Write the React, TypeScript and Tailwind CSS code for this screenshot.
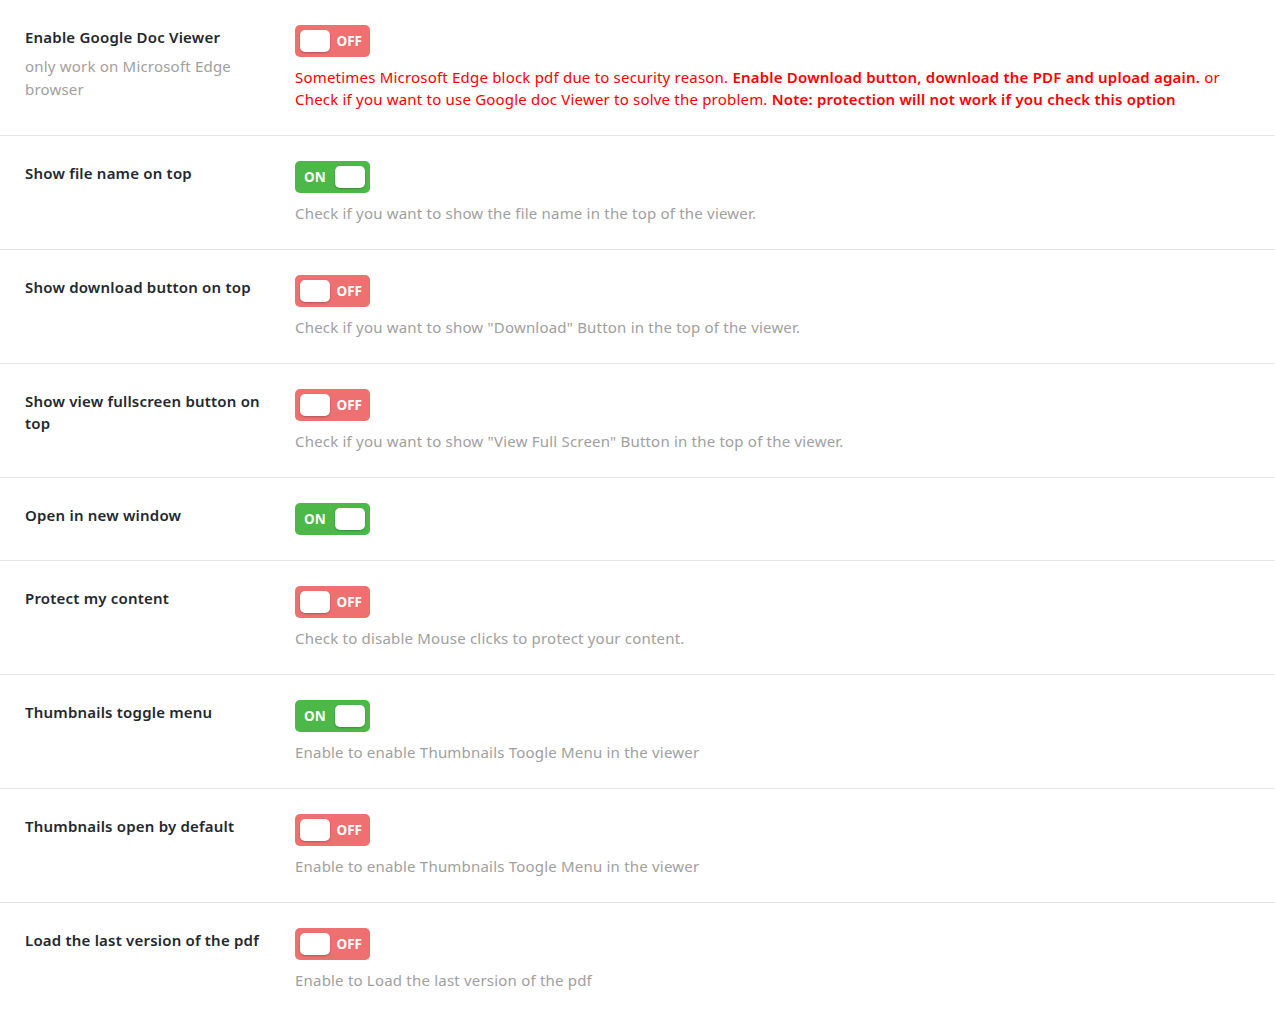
import React from 'react';

type Row = {
  label: string;
  sub?: string;
  on: boolean;
  desc?: React.ReactNode;
};

const rows: Row[] = [
  {
    label: 'Enable Google Doc Viewer',
    sub: 'only work on Microsoft Edge browser',
    on: false,
    desc: (
      <span className="text-[#ff0000]">
        Sometimes Microsoft Edge block pdf due to security reason.{' '}
        <b className="font-semibold">Enable Download button, download the PDF and upload again.</b> or Check if
        you want to use Google doc Viewer to solve the problem.{' '}
        <b className="font-semibold">Note: protection will not work if you check this option</b>
      </span>
    ),
  },
  { label: 'Show file name on top', on: true, desc: 'Check if you want to show the file name in the top of the viewer.' },
  { label: 'Show download button on top', on: false, desc: 'Check if you want to show "Download" Button in the top of the viewer.' },
  { label: 'Show view fullscreen button on top', on: false, desc: 'Check if you want to show "View Full Screen" Button in the top of the viewer.' },
  { label: 'Open in new window', on: true },
  { label: 'Protect my content', on: false, desc: 'Check to disable Mouse clicks to protect your content.' },
  { label: 'Thumbnails toggle menu', on: true, desc: 'Enable to enable Thumbnails Toogle Menu in the viewer' },
  { label: 'Thumbnails open by default', on: false, desc: 'Enable to enable Thumbnails Toogle Menu in the viewer' },
  { label: 'Load the last version of the pdf', on: false, desc: 'Enable to Load the last version of the pdf' },
];

function Toggle({ on }: { on: boolean }) {
  if (on) {
    return (
      <div className="flex items-center justify-between w-[75px] h-[32px] rounded-[5px] bg-[#4cb848] pl-[9px] pr-[5px]">
        <span className="text-white text-[13.5px] font-bold tracking-normal">ON</span>
        <span className="w-[30px] h-[22px] rounded-[5px] bg-white shadow-[0_1px_2px_rgba(0,0,0,0.25)]"></span>
      </div>
    );
  }
  return (
    <div className="flex items-center justify-between w-[75px] h-[32px] rounded-[5px] bg-[#ee7070] pl-[5px] pr-[8px]">
      <span className="w-[30px] h-[22px] rounded-[5px] bg-white shadow-[0_1px_2px_rgba(0,0,0,0.25)]"></span>
      <span className="text-white text-[13.5px] font-bold tracking-normal">OFF</span>
    </div>
  );
}

export default function App() {
  return (
    <div className="min-h-screen bg-white font-['Noto_Sans',sans-serif] text-[15px] tracking-[0.2px]">
      {rows.map((row, i) => (
        <div key={i} className="flex border-b border-[#e5e5e5] pt-[25px] pb-[25px]">
          <div className="w-[295px] shrink-0 pl-[25px] pr-[35px] pt-[1px]">
            <div className="text-[#23282d] font-semibold leading-[22px]">{row.label}</div>
            {row.sub && <div className="text-[#a0a0a0] leading-[23px] mt-[7px]">{row.sub}</div>}
          </div>
          <div className="flex-1 pr-[50px]">
            <Toggle on={row.on} />
            {row.desc && <div className="mt-[9px] leading-[22px] text-[#a0a0a0]">{row.desc}</div>}
          </div>
        </div>
      ))}
    </div>
  );
}
